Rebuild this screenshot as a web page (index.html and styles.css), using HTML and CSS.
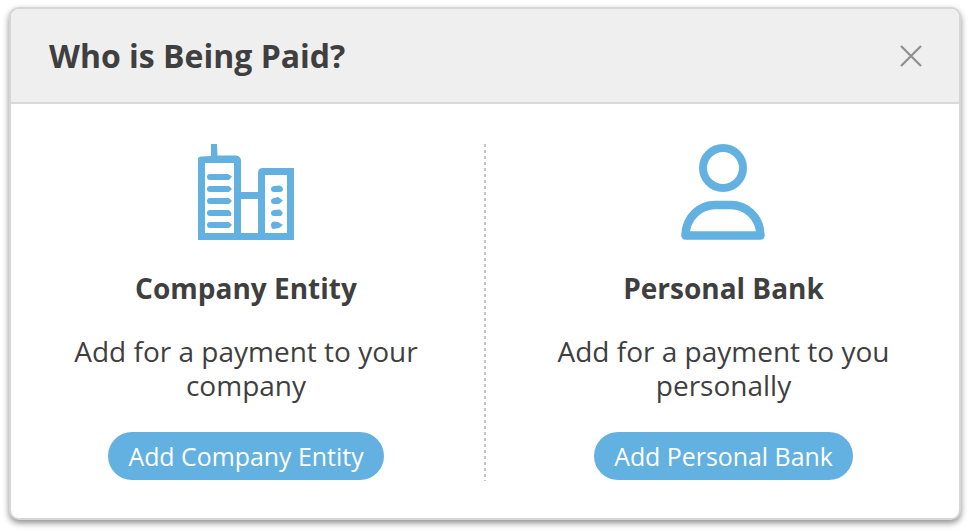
FILE: index.html
```html
<!DOCTYPE html>
<html lang="en">
<head>
    <meta charset="UTF-8">
    <title>Who is Being Paid?</title>
    <link rel="stylesheet" href="styles.css">
</head>
<body>
    <div class="modal">
        <div class="modal-header">
            <h1>Who is Being Paid?</h1>
            <svg class="close" width="24" height="24" viewBox="0 0 24 24">
                <path d="M2 2 L22 22 M22 2 L2 22" fill="none" stroke="#8f8f8f" stroke-width="2.2"/>
            </svg>
        </div>
        <div class="modal-body">
            <div class="option option-left">
                <svg class="icon" width="96" height="96" viewBox="0 0 96 96">
                    <path fill="#62b1e0" fill-rule="evenodd" d="M13 0 H19 L19.500 11.500 H38 Q43 12 43 17 V48 H60 V29 Q60 24 65 24 H96 V96 H0 V15 Q0 13 3 12.500 L13 12 Z M7 19 V89 H36 V19 Z M43 55 V89 H60 V55 Z M67 31 V89 H89 V31 Z"/>
                    <path class="slat" d="M12 30 H30 L34 32.500 L31 36 H12 Q9 36 9 33 Q9 30 12 30 Z"/>
                    <path class="slat" d="M12 42 H31 L34 45 L31 48 H12 Q9 48 9 45 Q9 42 12 42 Z"/>
                    <path class="slat" d="M12 54 H31 L34 57 L31 60 H12 Q9 60 9 57 Q9 54 12 54 Z"/>
                    <path class="slat" d="M12 66 H31 L33.500 69 L33 72 H12 Q9 72 9 69 Q9 66 12 66 Z"/>
                    <path class="slat" d="M12 78 H31 L34 81 L31 84 H12 Q9 84 9 81 Q9 78 12 78 Z"/>
                    <path class="slat" d="M76 42 L82 41.500 Q85 43 85 45 Q85 48 82 48 H76 Q73 48 73 45 Q73 42.500 76 42 Z"/>
                    <path class="slat" d="M76 54 L80 53 L85 56.500 L81 60 H76 Q73 60 73 57 Q73 54.500 76 54 Z"/>
                    <path class="slat" d="M76 66 L82 65.500 L85 69 L83 72 H76 Q73 72 73 69 Q73 66.500 76 66 Z"/>
                    <path class="slat" d="M76 77.500 L80 78 L85 81 L81 84 L75 85 Q73 84 73 81 Q73 78 76 77.500 Z"/>
                </svg>
                <h2>Company Entity</h2>
                <p>Add for a payment to your company</p>
                <button class="button">Add Company Entity</button>
            </div>
            <div class="divider"></div>
            <div class="option option-right">
                <svg class="icon icon-person" width="84" height="96" viewBox="0 0 84 96">
                    <circle cx="42" cy="24" r="20" fill="none" stroke="#62b1e0" stroke-width="8"/>
                    <path d="M4.500 91.500 C5 72 20 61 34 61 H50 C64 61 79 72 79.500 91.500 Z" fill="none" stroke="#62b1e0" stroke-width="8.500" stroke-linejoin="round"/>
                </svg>
                <h2>Personal Bank</h2>
                <p>Add for a payment to you personally</p>
                <button class="button">Add Personal Bank</button>
            </div>
        </div>
    </div>
</body>
</html>
```

FILE: styles.css
```css
html, body {
    margin: 0;
    padding: 0;
}
body {
    width: 970px;
    height: 532px;
    overflow: hidden;
    background-color: #fff;
    font-family: "Open Sans", Arial, sans-serif;
    color: #3f3f3f;
    padding: 7px 0 0 9px;
    box-sizing: border-box;
}
.modal {
    width: 952px;
    height: 513px;
    box-sizing: border-box;
    background-color: #fff;
    border: 2px solid #d6d6d6;
    border-radius: 10px;
    box-shadow: 0 3px 6px rgba(0, 0, 0, 0.45);
    overflow: hidden;
}
.modal-header {
    height: 95px;
    box-sizing: border-box;
    background-color: #efefef;
    border-bottom: 2px solid #d9d9d9;
    display: flex;
    align-items: center;
    justify-content: space-between;
    padding: 0 36px 0 38px;
}
.modal-header h1 {
    margin: 0;
    font-size: 32px;
    font-weight: 700;
}
.modal-body {
    display: flex;
    padding: 40px 0 0;
}
.option {
    height: 337px;
    box-sizing: border-box;
    display: flex;
    flex-direction: column;
    align-items: center;
    text-align: center;
}
.option-left {
    width: 474px;
    padding-right: 3px;
}
.option-right {
    width: 474px;
    padding-left: 2px;
}
.divider {
    width: 2px;
    height: 337px;
    flex-shrink: 0;
    background: repeating-linear-gradient(to bottom, #c4c4c4 0, #c4c4c4 3px, transparent 3px, transparent 6px);
}
.icon {
    display: block;
    flex-shrink: 0;
}
.icon-person {
    margin-left: -1px;
}
.slat {
    fill: #62b1e0;
}
.option h2 {
    margin: 28px 0 0;
    font-size: 28px;
    line-height: 40px;
    font-weight: 700;
}
.option p {
    margin: 26px 0 0;
    width: 370px;
    font-size: 28px;
    line-height: 34px;
}
.button {
    margin-top: 30px;
    height: 48px;
    padding: 0 20.500px;
    border: none;
    border-radius: 24px;
    background-color: #62b1e0;
    color: #fff;
    font-family: inherit;
    font-size: 24.900px;
    cursor: pointer;
}
```
